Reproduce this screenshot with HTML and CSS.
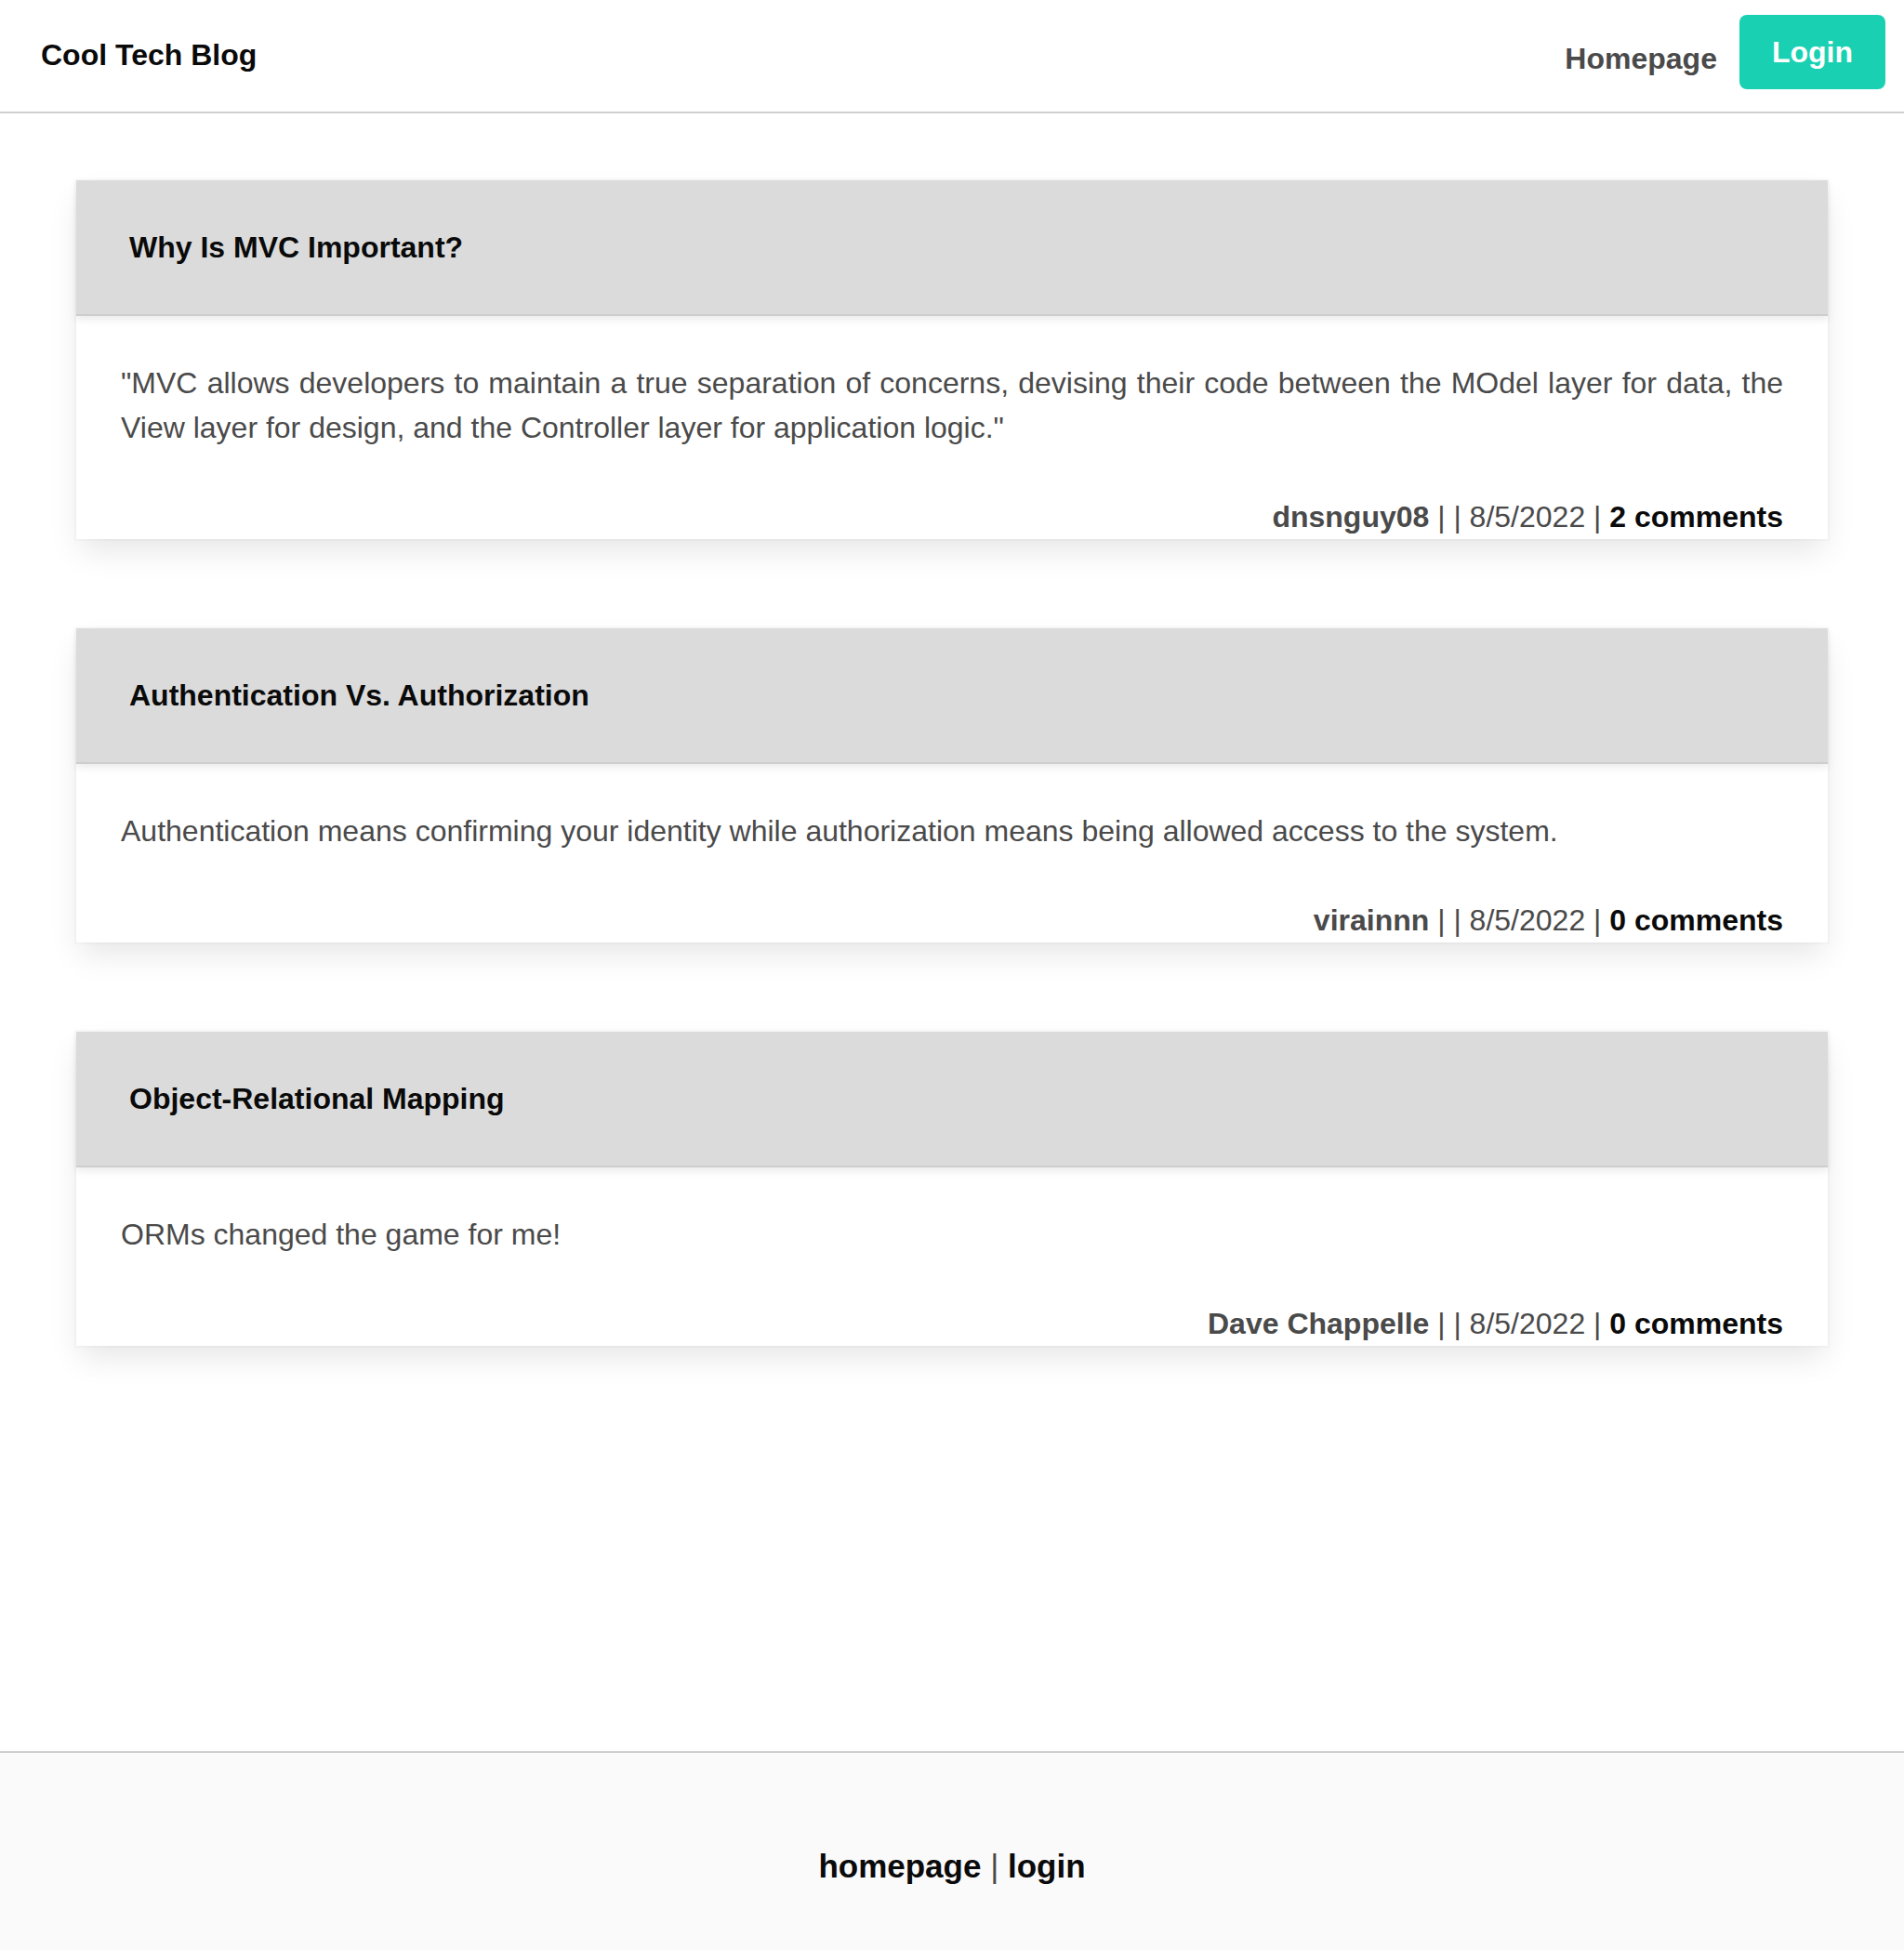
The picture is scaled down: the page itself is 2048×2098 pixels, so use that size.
FILE: index.html
```html
<!DOCTYPE html>
<html lang="en">
<head>
<meta charset="utf-8">
<title>Cool Tech Blog</title>
<link rel="stylesheet" href="styles.css">
</head>
<body>
<div class="page">
  <header class="site-header">
    <div class="brand">Cool Tech Blog</div>
    <nav class="nav">
      <a class="nav-link" href="#">Homepage</a>
      <a class="btn-login" href="#">Login</a>
    </nav>
  </header>

  <main class="posts">
    <article class="card">
      <div class="card-header"><h2 class="card-title">Why Is MVC Important?</h2></div>
      <div class="card-content"><p>"MVC allows developers to maintain a true separation of concerns, devising their code between the MOdel layer for data, the View layer for design, and the Controller layer for application logic."</p></div>
      <div class="card-meta"><strong class="author">dnsnguy08</strong> | | 8/5/2022 | <strong class="comments">2 comments</strong></div>
    </article>

    <article class="card">
      <div class="card-header"><h2 class="card-title">Authentication Vs. Authorization</h2></div>
      <div class="card-content"><p>Authentication means confirming your identity while authorization means being allowed access to the system.</p></div>
      <div class="card-meta"><strong class="author">virainnn</strong> | | 8/5/2022 | <strong class="comments">0 comments</strong></div>
    </article>

    <article class="card">
      <div class="card-header"><h2 class="card-title">Object-Relational Mapping</h2></div>
      <div class="card-content"><p>ORMs changed the game for me!</p></div>
      <div class="card-meta"><strong class="author">Dave Chappelle</strong> | | 8/5/2022 | <strong class="comments">0 comments</strong></div>
    </article>
  </main>

  <footer class="site-footer">
    <p class="footer-links"><a href="#">homepage</a> <span class="sep">|</span> <a href="#">login</a></p>
  </footer>
</div>
</body>
</html>
```

FILE: styles.css
```css
* { box-sizing: border-box; }

html, body {
  margin: 0;
  padding: 0;
  background: #ffffff;
}

body {
  font-family: "Liberation Sans", Arial, Helvetica, sans-serif;
  font-size: 32px;
  line-height: 48px;
  color: #4a4a4a;
}

a { text-decoration: none; }

.page {
  min-height: 100vh;
  display: flex;
  flex-direction: column;
}

/* Header */
.site-header {
  height: 122px;
  border-bottom: 2px solid #cfcfcf;
  display: flex;
  justify-content: space-between;
  align-items: flex-start;
  padding: 0 20px 0 44px;
}

.brand {
  margin-top: 35px;
  font-weight: 700;
  color: #0a0a0a;
}

.nav {
  display: flex;
  align-items: flex-start;
  gap: 24px;
}

.nav-link {
  margin-top: 39px;
  font-weight: 700;
  color: #4a4a4a;
}

.btn-login {
  margin-top: 16px;
  display: block;
  height: 80px;
  padding: 16px 35px;
  border-radius: 8px;
  background: #19d1b2;
  color: #ffffff;
  font-weight: 700;
}

/* Posts */
.posts {
  flex: 1;
  padding: 72px 82px 0;
  display: flex;
  flex-direction: column;
  gap: 96px;
}

.card {
  background: #ffffff;
  box-shadow: 0 16px 32px -4px rgba(10, 10, 10, 0.1), 0 0 0 2px rgba(10, 10, 10, 0.02);
}

.card-header {
  background: #dbdbdb;
  border-bottom: 2px solid #cdcdcd;
  box-shadow: 0 4px 8px rgba(10, 10, 10, 0.08);
  padding: 48px 57px;
}

.card-title {
  margin: 0;
  font-size: 32px;
  line-height: 48px;
  font-weight: 700;
  color: #0a0a0a;
}

.card-content {
  padding: 48px;
}

.card-content p {
  margin: 0;
  text-align: justify;
}

.card-meta {
  text-align: right;
  padding: 0 48px;
  color: #4a4a4a;
}

.author {
  font-weight: 700;
  color: #4a4a4a;
}

.comments {
  font-weight: 700;
  color: #0a0a0a;
}

/* Footer */
.site-footer {
  margin-top: auto;
  background: #fafafa;
  border-top: 2px solid #cfcfcf;
  height: 214px;
  padding-top: 96px;
  text-align: center;
}

.footer-links {
  margin: 0;
  font-size: 35px;
  line-height: 52px;
  color: #4a4a4a;
}

.footer-links a {
  font-weight: 700;
  color: #0a0a0a;
}
```
